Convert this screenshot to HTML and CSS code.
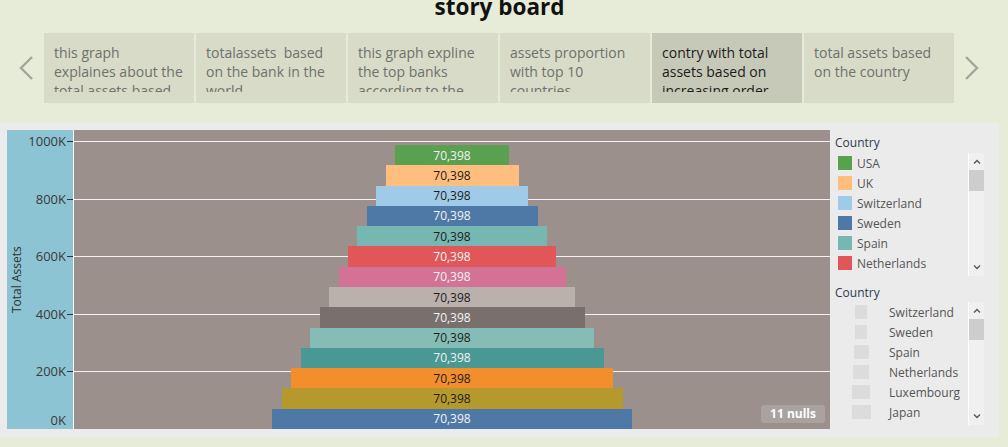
FILE: index.html
```html
<!DOCTYPE html>
<html>
<head>
  <title>story board</title>
  <link rel="stylesheet" href="styles.css">
</head>
<body>
  <div class="story">
    <h1 class="title">story board</h1>

    <div class="nav">
      <div class="nav-arrow left">
        <svg width="15" height="24" viewBox="0 0 15 24"><polyline points="13,1 2,12 13,23" fill="none" stroke="#a3a79b" stroke-width="2.4"/></svg>
      </div>
      <div class="tabs">
        <div class="tab"><div class="tab-text">this graph<br>explaines about the<br>total assets based<br>on the bank</div></div>
        <div class="tab"><div class="tab-text">totalassets&nbsp; based<br>on the bank in the<br>world</div></div>
        <div class="tab"><div class="tab-text">this graph expline<br>the top banks<br>according to the<br>total assets</div></div>
        <div class="tab"><div class="tab-text">assets proportion<br>with top 10<br>countries</div></div>
        <div class="tab active"><div class="tab-text">contry with total<br>assets based on<br>increasing order</div></div>
        <div class="tab"><div class="tab-text">total assets based<br>on the country</div></div>
      </div>
      <div class="nav-arrow right">
        <svg width="15" height="24" viewBox="0 0 15 24"><polyline points="2,1 13,12 2,23" fill="none" stroke="#a3a79b" stroke-width="2.4"/></svg>
      </div>
    </div>
  </div>

  <div class="dashboard">
    <div class="axis">
      <div class="axis-title">Total Assets</div>
      <div class="tick" style="top:11px"><span>1000K</span></div>
      <div class="tick" style="top:69px"><span>800K</span></div>
      <div class="tick" style="top:126px"><span>600K</span></div>
      <div class="tick" style="top:184px"><span>400K</span></div>
      <div class="tick" style="top:241px"><span>200K</span></div>
      <div class="tick zero" style="top:290px"><span>0K</span></div>
    </div>

    <div class="plot">
      <div class="grid" style="top:11px"></div>
      <div class="grid" style="top:69px"></div>
      <div class="grid" style="top:126px"></div>
      <div class="grid" style="top:184px"></div>
      <div class="grid" style="top:241px"></div>

      <div class="bars">
        <div class="bar green light-text" style="width:114px">70,398</div>
        <div class="bar peach" style="width:133px">70,398</div>
        <div class="bar sky" style="width:152px">70,398</div>
        <div class="bar blue light-text" style="width:171px">70,398</div>
        <div class="bar teal" style="width:190px">70,398</div>
        <div class="bar red light-text" style="width:208px">70,398</div>
        <div class="bar pink light-text" style="width:227px">70,398</div>
        <div class="bar stone" style="width:246px">70,398</div>
        <div class="bar slate light-text" style="width:265px">70,398</div>
        <div class="bar mint" style="width:284px">70,398</div>
        <div class="bar sea light-text" style="width:303px">70,398</div>
        <div class="bar orange" style="width:322px">70,398</div>
        <div class="bar olive" style="width:341px">70,398</div>
        <div class="bar blue light-text" style="width:360px">70,398</div>
      </div>

      <div class="nulls">11 nulls</div>
    </div>

    <div class="legends">
      <div class="legend first">
        <div class="legend-title">Country</div>
        <div class="legend-box">
          <ul class="legend-list">
            <li><span class="swatch green"></span>USA</li>
            <li><span class="swatch peach"></span>UK</li>
            <li><span class="swatch sky"></span>Switzerland</li>
            <li><span class="swatch blue"></span>Sweden</li>
            <li><span class="swatch teal"></span>Spain</li>
            <li><span class="swatch red"></span>Netherlands</li>
          </ul>
          <div class="scroll">
            <div class="scroll-btn"><svg width="8" height="5" viewBox="0 0 8 5"><polyline points="1,4.5 4,1.5 7,4.5" fill="none" stroke="#555" stroke-width="1.3"/></svg></div>
            <div class="thumb"></div>
            <div class="scroll-track"></div>
            <div class="scroll-btn"><svg width="8" height="5" viewBox="0 0 8 5"><polyline points="1,0.5 4,3.5 7,0.5" fill="none" stroke="#555" stroke-width="1.3"/></svg></div>
          </div>
        </div>
      </div>

      <div class="legend second">
        <div class="legend-title">Country</div>
        <div class="legend-box">
          <ul class="legend-list sizes">
            <li><span class="size-cell"><span class="size" style="width:12px"></span></span>Switzerland</li>
            <li><span class="size-cell"><span class="size" style="width:12px"></span></span>Sweden</li>
            <li><span class="size-cell"><span class="size" style="width:15px"></span></span>Spain</li>
            <li><span class="size-cell"><span class="size" style="width:16px"></span></span>Netherlands</li>
            <li><span class="size-cell"><span class="size" style="width:18px"></span></span>Luxembourg</li>
            <li><span class="size-cell"><span class="size" style="width:19px"></span></span>Japan</li>
          </ul>
          <div class="scroll">
            <div class="scroll-btn"><svg width="8" height="5" viewBox="0 0 8 5"><polyline points="1,4.5 4,1.5 7,4.5" fill="none" stroke="#555" stroke-width="1.3"/></svg></div>
            <div class="thumb"></div>
            <div class="scroll-track"></div>
            <div class="scroll-btn"><svg width="8" height="5" viewBox="0 0 8 5"><polyline points="1,0.5 4,3.5 7,0.5" fill="none" stroke="#555" stroke-width="1.3"/></svg></div>
          </div>
        </div>
      </div>
    </div>
  </div>
</body>
</html>
```

FILE: styles.css
```css
body {
  margin: 0;
  background-color: #e7ecd8;
  font-family: "Open Sans", Arial, sans-serif;
  overflow: hidden;
}

.story {
  display: flow-root;
  width: 999px;
  height: 123px;
}

.title {
  margin: -5px 0 0;
  font-size: 22.5px;
  line-height: 24px;
  font-weight: bold;
  text-align: center;
  color: #111;
}

.nav {
  display: flex;
  align-items: center;
  margin-top: 14px;
}

.nav-arrow {
  display: flex;
  align-items: center;
}

.nav-arrow.left {
  width: 44px;
  padding-left: 19px;
  box-sizing: border-box;
}

.nav-arrow.right {
  margin-left: 10px;
}

.tabs {
  display: flex;
  gap: 2px;
}

.tab {
  width: 150px;
  height: 70px;
  box-sizing: border-box;
  padding: 10px 0 0 10px;
  background-color: #d7dbc8;
  color: #6f716b;
  font-size: 14px;
  line-height: 19px;
  white-space: nowrap;
  overflow: hidden;
}

.tab.active {
  background-color: #c6c9b7;
  color: #1b1b1b;
}

.tab-text {
  max-height: 49px;
  overflow: hidden;
}

.dashboard {
  width: 999px;
  height: 314px;
  box-sizing: border-box;
  padding: 7px 0 0 7px;
  background-color: #ebebeb;
  display: flex;
}

/* y axis */
.axis {
  position: relative;
  width: 66px;
  height: 299px;
  background-color: #8cc4d3;
  border-right: 1px solid #fff;
  color: #3a3a3a;
  font-size: 13px;
}

.axis-title {
  position: absolute;
  left: 4px;
  top: 0;
  bottom: 0;
  display: flex;
  align-items: center;
  justify-content: center;
  writing-mode: vertical-rl;
  transform: rotate(180deg);
  color: #333;
  font-size: 12px;
  line-height: 12px;
}

.tick {
  position: absolute;
  right: 0;
  height: 1px;
  width: 6px;
  background-color: #333;
}

.tick span {
  position: absolute;
  right: 7px;
  top: -9px;
  line-height: 18px;
}

.tick.zero {
  background: none;
}

/* plot */
.plot {
  position: relative;
  width: 756px;
  height: 299px;
  background-color: #9b908b;
  overflow: hidden;
}

.grid {
  position: absolute;
  left: 0;
  right: 0;
  height: 1px;
  background-color: #f4f2f0;
}

.bars {
  position: relative;
  height: 100%;
  box-sizing: border-box;
  padding-top: 15px;
  display: flex;
  flex-direction: column;
  align-items: center;
}

.bar {
  flex: 1;
  display: flex;
  align-items: center;
  justify-content: center;
  font-size: 12px;
  color: #1c1c1c;
}

.bar.light-text {
  color: #f3f3f3;
}

.green { background-color: #59a14f; }
.peach { background-color: #ffbe7d; }
.sky { background-color: #a0cbe8; }
.blue { background-color: #4e79a7; }
.teal { background-color: #76b7b2; }
.red { background-color: #e15759; }
.pink { background-color: #d37295; }
.stone { background-color: #bab0ac; }
.slate { background-color: #79706e; }
.mint { background-color: #86bcb6; }
.sea { background-color: #499894; }
.orange { background-color: #f28e2b; }
.olive { background-color: #b6992d; }

.nulls {
  position: absolute;
  right: 5px;
  bottom: 6px;
  width: 64px;
  height: 18px;
  border-radius: 3px;
  background-color: #a9a29e;
  color: #fff;
  font-size: 12px;
  font-weight: bold;
  line-height: 18px;
  text-align: center;
}

/* legends */
.legends {
  width: 169px;
  padding-left: 5px;
  box-sizing: border-box;
}

.legend-title {
  font-size: 12px;
  line-height: 16px;
  color: #2f3a4f;
}

.legend.first .legend-title {
  margin-top: 5px;
}

.legend.first .legend-box {
  margin-top: 2px;
}

.legend.second {
  margin-top: 9px;
}

.legend.second .legend-box {
  margin-top: 1px;
}

.legend-box {
  display: flex;
  width: 149px;
  height: 123px;
}

.legend-list {
  flex: 1;
  list-style: none;
  margin: 0;
  padding: 0 0 0 3px;
}

.legend-list li {
  display: flex;
  align-items: center;
  height: 20px;
  font-size: 12px;
  color: #555;
}

.swatch {
  width: 14px;
  height: 14px;
  margin-right: 5px;
}

.sizes {
  padding-left: 2px;
}

.size-cell {
  display: flex;
  justify-content: center;
  width: 48px;
  margin-right: 4px;
}

.size {
  height: 14px;
  background-color: #dcdcdc;
}

.scroll {
  width: 15px;
  border-left: 1px solid #fff;
  background-color: #f0f0f0;
  display: flex;
  flex-direction: column;
}

.scroll-btn {
  height: 17px;
  display: flex;
  align-items: center;
  justify-content: center;
}

.thumb {
  height: 21px;
  background-color: #cdcdcd;
}

.scroll-track {
  flex: 1;
}
```
